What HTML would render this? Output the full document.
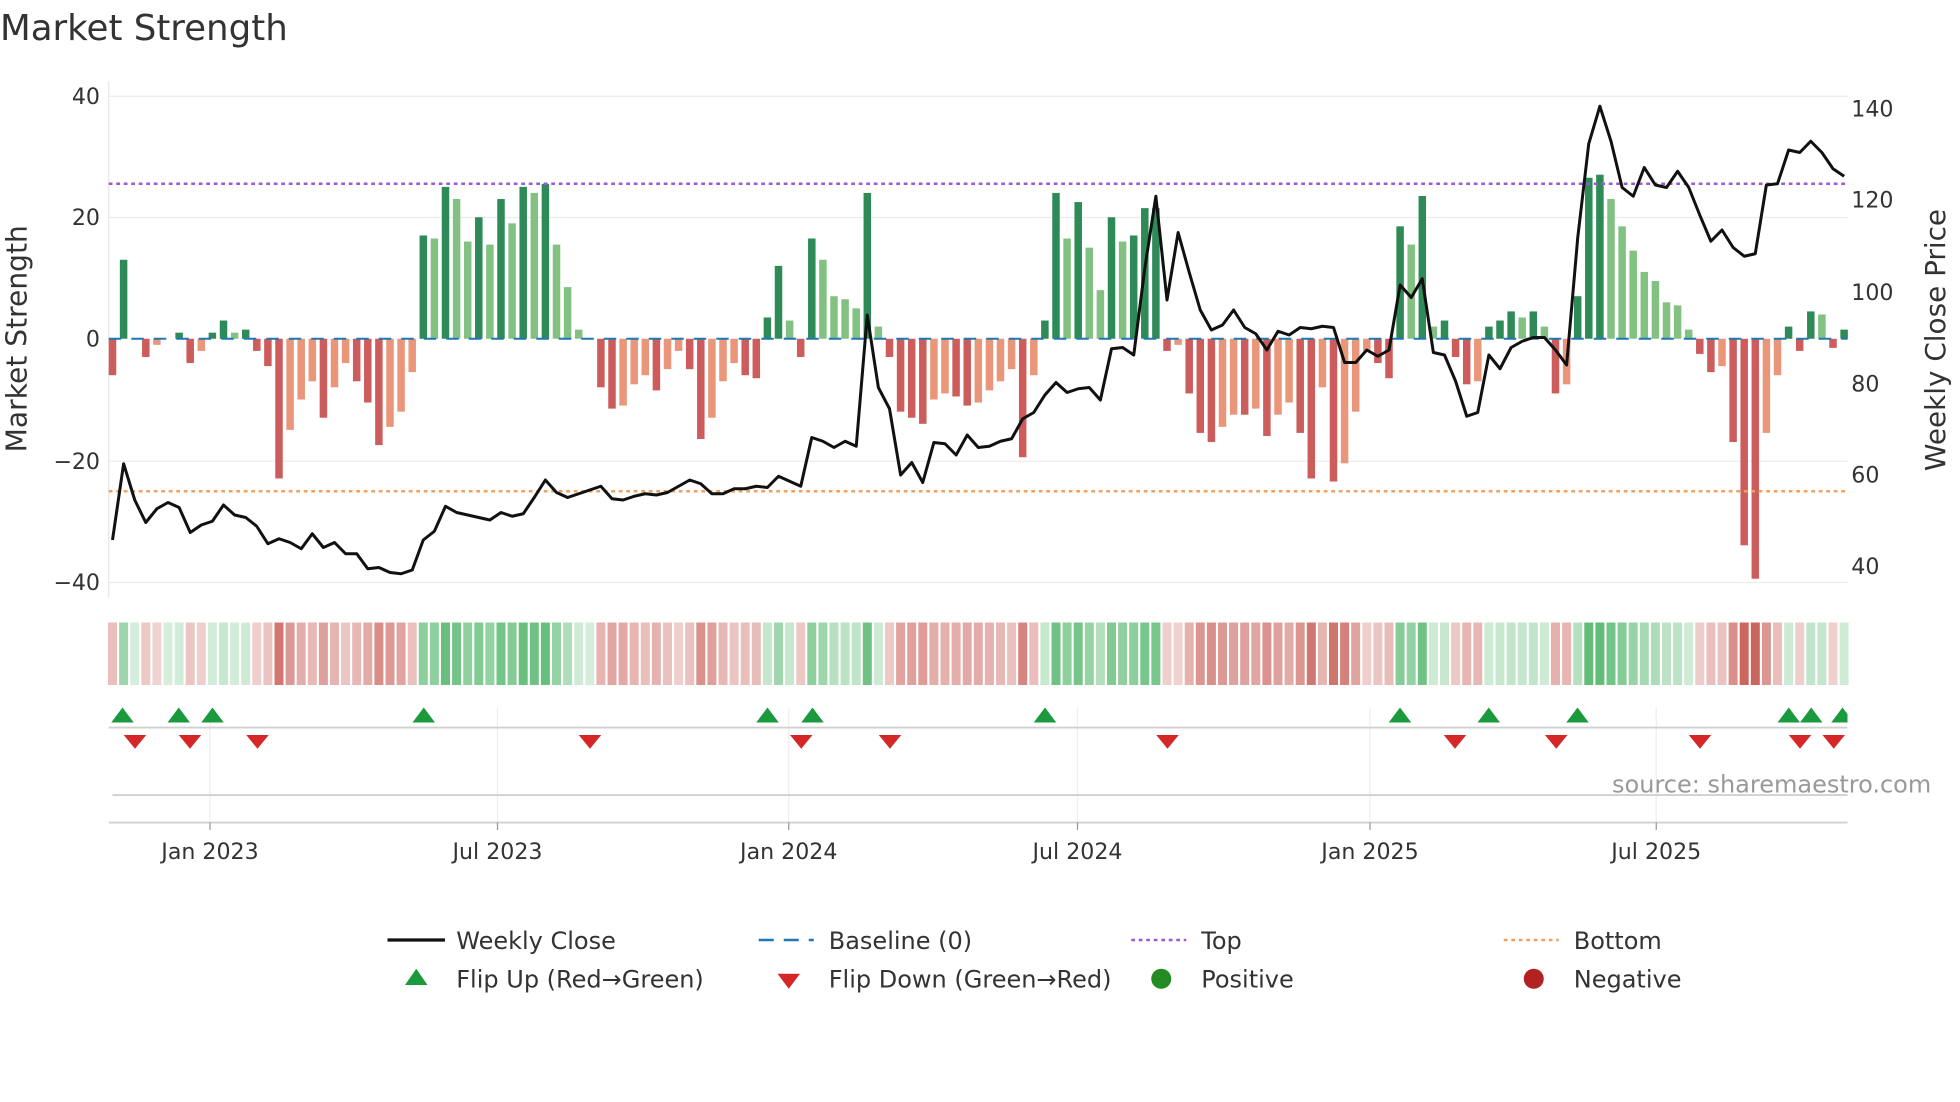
<!DOCTYPE html>
<html><head><meta charset="utf-8"><style>
html,body{margin:0;padding:0;background:#fff;overflow:hidden}
svg{display:block}
text{font-family:"DejaVu Sans","Liberation Sans",sans-serif;fill:#333}
</style></head><body>
<svg id="s" width="1960" height="1102" viewBox="0 0 1568 881.6" xmlns="http://www.w3.org/2000/svg">
<rect width="1568" height="882" fill="#fff"/>
<text x="0" y="32" font-size="28.5">Market Strength</text>
<g stroke="#ececec" stroke-width="1">
<line x1="87" x2="1478" y1="77" y2="77"/><line x1="87" x2="1478" y1="174" y2="174"/>
<line x1="87" x2="1478" y1="369" y2="369"/><line x1="87" x2="1478" y1="466" y2="466"/>
</g>
<line x1="87" x2="87" y1="65" y2="478" stroke="#e6e6e6"/>
<g font-size="17.7" text-anchor="end">
<text x="80" y="83">40</text><text x="80" y="180">20</text><text x="80" y="277">0</text>
<text x="80" y="375">−20</text><text x="80" y="472">−40</text>
</g>
<g font-size="17.7">
<text x="1481" y="93">140</text><text x="1481" y="166">120</text><text x="1481" y="240">100</text>
<text x="1481" y="313">80</text><text x="1481" y="386">60</text><text x="1481" y="459">40</text>
</g>
<text transform="translate(21,271) rotate(-90)" font-size="22.5" text-anchor="middle">Market Strength</text>
<text transform="translate(1556,272) rotate(-90)" font-size="22.3" text-anchor="middle">Weekly Close Price</text>
<g id="bars"></g>
<line x1="87" x2="1478" y1="271" y2="271" stroke="#1f77b4" stroke-width="1.6" stroke-dasharray="10,8"/>
<line x1="87" x2="1478" y1="147" y2="147" stroke="#9b59d6" stroke-width="2" stroke-dasharray="3,3"/>
<line x1="87" x2="1478" y1="393" y2="393" stroke="#f0a060" stroke-width="2" stroke-dasharray="3,3"/>
<polyline id="price" fill="none" stroke="#111" stroke-width="2.4" stroke-linejoin="round"/>
<g id="heat"></g>
<g stroke="#eee"><line x1="168" x2="168" y1="566" y2="658"/><line x1="398" x2="398" y1="566" y2="658"/><line x1="631" x2="631" y1="566" y2="658"/><line x1="862" x2="862" y1="566" y2="658"/><line x1="1096" x2="1096" y1="566" y2="658"/><line x1="1325" x2="1325" y1="566" y2="658"/></g>
<line x1="87" x2="1478" y1="582" y2="582" stroke="#d0d0d0" stroke-width="1.5"/>
<line x1="90" x2="1478" y1="636" y2="636" stroke="#d0d0d0" stroke-width="1.5"/>
<line x1="87" x2="1478" y1="658" y2="658" stroke="#d0d0d0" stroke-width="1.5"/>
<g id="tri"></g>
<text x="1545" y="634" font-size="19.2" text-anchor="end" style="fill:#999">source: sharemaestro.com</text>
<g stroke="#999"><line x1="168" x2="168" y1="658" y2="664"/><line x1="398" x2="398" y1="658" y2="664"/><line x1="631" x2="631" y1="658" y2="664"/><line x1="862" x2="862" y1="658" y2="664"/><line x1="1096" x2="1096" y1="658" y2="664"/><line x1="1325" x2="1325" y1="658" y2="664"/></g>
<g font-size="17.7" text-anchor="middle">
<text x="168" y="687">Jan 2023</text><text x="398" y="687">Jul 2023</text><text x="631" y="687">Jan 2024</text>
<text x="862" y="687">Jul 2024</text><text x="1096" y="687">Jan 2025</text><text x="1325" y="687">Jul 2025</text>
</g>
<g font-size="19.2">
<line x1="310" x2="356" y1="752" y2="752" stroke="#111" stroke-width="2.6"/><text x="365" y="759">Weekly Close</text>
<line x1="607" x2="651" y1="752" y2="752" stroke="#1f77b4" stroke-width="2" stroke-dasharray="12,8"/><text x="663" y="759">Baseline (0)</text>
<line x1="905" x2="949" y1="752" y2="752" stroke="#9b59d6" stroke-width="2" stroke-dasharray="3,3"/><text x="961" y="759">Top</text>
<line x1="1203" x2="1247" y1="752" y2="752" stroke="#f0a060" stroke-width="2" stroke-dasharray="3,3"/><text x="1259" y="759">Bottom</text>
<polygon points="324,788 342,788 333,775" fill="#1a9a3c"/><text x="365" y="790">Flip Up (Red→Green)</text>
<polygon points="622,779 640,779 631,791" fill="#d62728"/><text x="663" y="790">Flip Down (Green→Red)</text>
<circle cx="929" cy="783" r="8" fill="#228b22"/><text x="961" y="790">Positive</text>
<circle cx="1227" cy="783" r="8" fill="#b22222"/><text x="1259" y="790">Negative</text>
</g>
</svg>
<script>
var v=[-6,13,0,-3,-1,0,1,-4,-2,1,3,1,1.5,-2,-4.5,-23,-15,-10,-7,-13,-8,-4,-7,-10.5,-17.5,-14.5,-12,-5.5,17,16.5,25,23,16,20,15.5,23,19,25,24,25.5,15.5,8.5,1.5,0,-8,-11.5,-11,-7.5,-6,-8.5,-5,-2,-5,-16.5,-13,-7,-4,-6,-6.5,3.5,12,3,-3,16.5,13,7,6.5,5,24,2,-3,-12,-13,-14,-10,-9,-9.5,-11,-10.5,-8.5,-7,-5,-19.5,-6,3,24,16.5,22.5,15,8,20,16,17,21.5,21.5,-2,-1,-9,-15.5,-17,-14.5,-12.5,-12.5,-11.5,-16,-12.5,-10.5,-15.5,-23,-8,-23.5,-20.5,-12,-2,-4,-6.5,18.5,15.5,23.5,2,3,-3,-7.5,-7,2,3,4.5,3.5,4.5,2,-9,-7.5,7,26.5,27,23,18.5,14.5,11,9.5,6,5.5,1.5,-2.5,-5.5,-4.5,-17,-34,-39.5,-15.5,-6,2,-2,4.5,4,-1.5,1.5];
var SP=8.88,b="",h="";
for(var i=0;i<v.length;i++){var x=90+i*SP,val=v[i],p=i?v[i-1]:0;
var dark=Math.abs(val)>=Math.abs(p)||(val*p<0);
var c=val>=0?(dark?"#2e8b57":"#82c182"):(dark?"#cd5c5c":"#e9967a");
var hgt=Math.abs(val)*4.86;var y=val>=0?271-hgt:271;
b+='<rect x="'+(x-3)+'" y="'+y+'" width="6" height="'+hgt+'" fill="'+c+'"/>';
h+='<rect x="'+(x-3.6)+'" y="498" width="7.2" height="50" fill="'+(val>=0?"#3fae5a":"#c0443c")+'" fill-opacity="'+(0.22+0.6*Math.min(1,Math.abs(val)/27)).toFixed(2)+'"/>';}
document.getElementById("bars").innerHTML=b;document.getElementById("heat").innerHTML=h;
var py=[432,371,400,418,407,402,406,426,420,417,404,412,414,421,435,431,434,439,427,438,434,443,443,455,454,458,459,456,432,425,405,410,412,414,416,410,413,411,398,384,394,398,395,392,389,399,400,397,395,396,394,389,384,387,395,395,391,391,389,390,381,385,389,350,353,358,353,357,252,310,327,380,370,386,354,355,364,348,358,357,353,351,335,330,316,306,314,311,310,320,279,278,284,215,157,240,186,218,248,264,260,248,262,267,280,265,268,262,263,261,262,290,290,280,285,280,228,238,223,282,284,305,333,330,284,295,278,273,270,270,280,292,190,115,85,113,150,157,134,148,150,137,150,172,193,184,198,205,203,148,147,120,122,113,122,135,141];
var pts=[];for(var i=0;i<py.length;i++)pts.push((90+i*SP).toFixed(1)+","+py[i]);
document.getElementById("price").setAttribute("points",pts.join(" "));
var up=[98,143,170,339,614,650,836,1120,1191,1262,1431,1449,1474],dn=[108,152,206,472,641,712,934,1164,1245,1360,1440,1467],t="";
up.forEach(function(x){t+='<polygon points="'+(x-9)+',578 '+(x+9)+',578 '+x+',566" fill="#1a9a3c"/>';});
dn.forEach(function(x){t+='<polygon points="'+(x-9)+',588 '+(x+9)+',588 '+x+',599" fill="#d62728"/>';});
t+='<rect x="1478" y="560" width="20" height="45" fill="#fff"/>';
document.getElementById("tri").innerHTML=t;
</script>
</body></html>
